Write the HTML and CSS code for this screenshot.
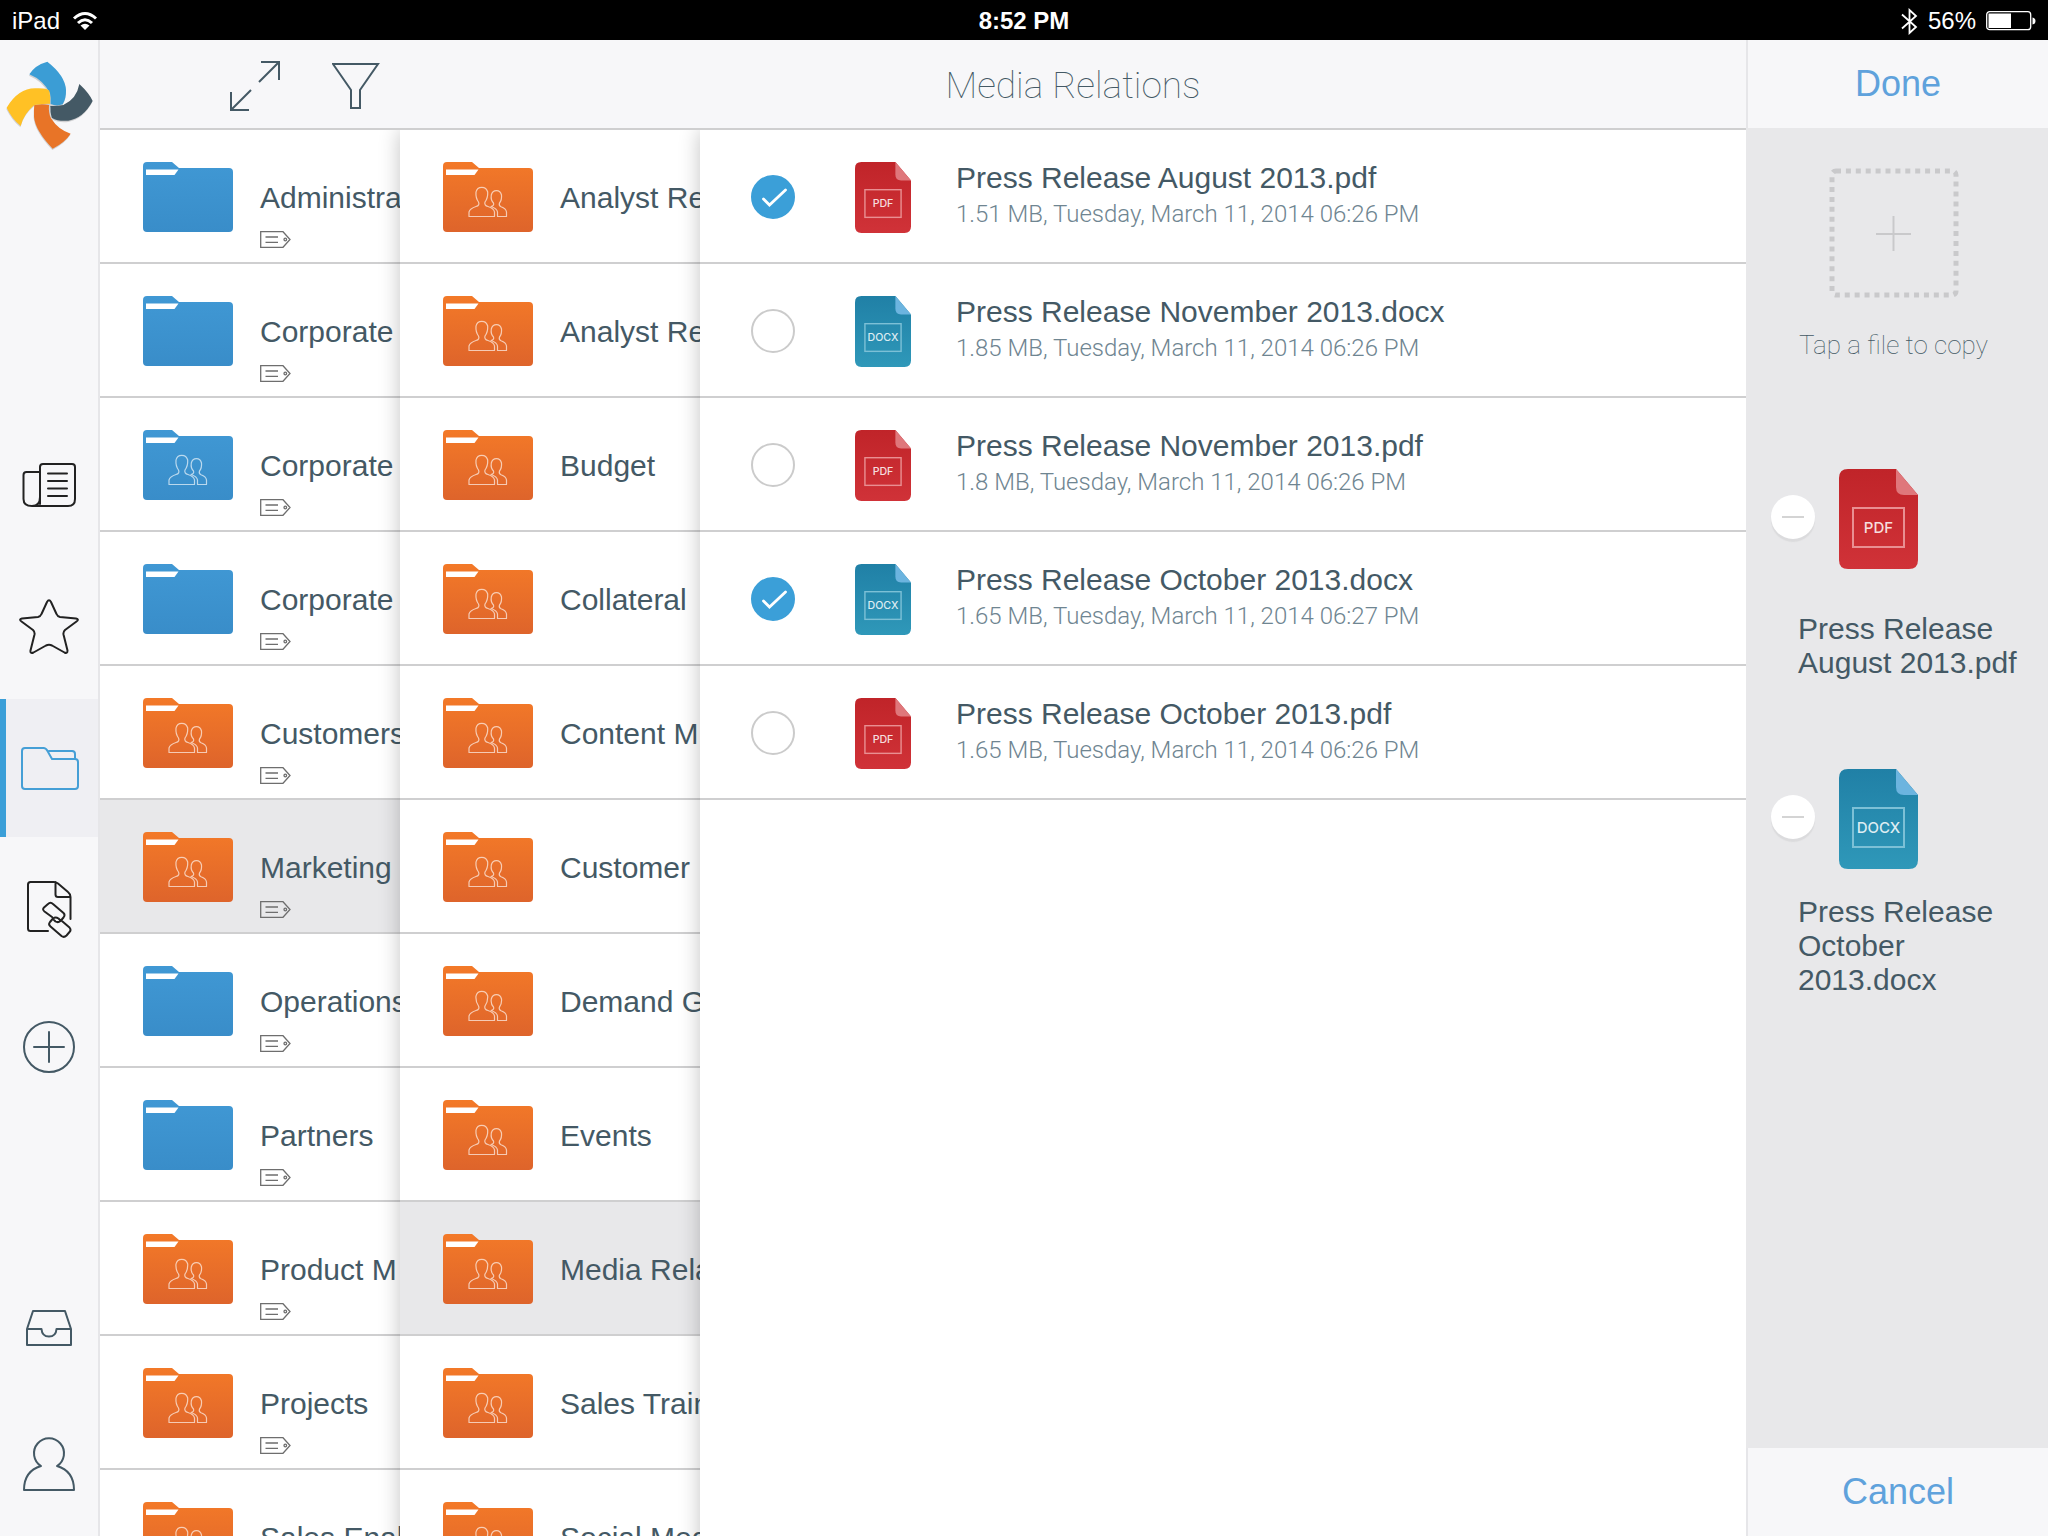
FILE: index.html
```html
<!DOCTYPE html>
<html lang="en">
<head>
<meta charset="utf-8">
<meta name="viewport" content="width=device-width, initial-scale=1">
<title>Media Relations</title>
<link rel="stylesheet" href="styles.css">
</head>
<body>
<svg class="defs" aria-hidden="true">
  <defs>
    <linearGradient id="g-orange" x1="0" y1="0" x2="0" y2="1"><stop offset="0" stop-color="#f37928"/><stop offset="1" stop-color="#de642b"/></linearGradient>
    <linearGradient id="g-blue" x1="0" y1="0" x2="0" y2="1"><stop offset="0" stop-color="#4098d4"/><stop offset="1" stop-color="#398dc9"/></linearGradient>
    <linearGradient id="g-pdf" x1="0" y1="0" x2="0" y2="1"><stop offset="0" stop-color="#c02429"/><stop offset="1" stop-color="#d03238"/></linearGradient>
    <linearGradient id="g-docx" x1="0" y1="0" x2="0" y2="1"><stop offset="0" stop-color="#2080a6"/><stop offset="1" stop-color="#2f98b9"/></linearGradient>
  </defs>
  <symbol id="folder" viewBox="0 0 90 70">
    <path d="M4 0H29L36 6H86Q90 6 90 10V66Q90 70 86 70H4Q0 70 0 66V4Q0 0 4 0Z"/>
    <path fill="#fff" d="M3 7.500H35.500L31.500 13H3Z"/>
  </symbol>
  <symbol id="people" viewBox="0 0 90 70">
    <g fill="none" stroke="#fff" stroke-opacity=".65" stroke-width="1.200" stroke-linejoin="round">
      <path d="M26 54.500V50Q27 46.500 33 44.500Q37 43.500 35.500 40Q32.500 36 33 30Q34 25.300 38.800 25.300Q43.500 25.300 44.700 30Q45 36 42 40Q41 43.500 45 44.500Q51 46.500 51.500 50V54.500Z"/>
      <path d="M48 44.500Q51.500 43.500 50.500 41Q47.500 38 48.300 33Q49.300 28.700 53.500 28.700Q57.500 28.700 58.500 33Q59 38 56.500 41Q55.500 43.500 58 44.800Q63 46.500 63.500 50V54.500H54.500V50Q54 46.500 48 44.500Z"/>
    </g>
  </symbol>
  <symbol id="tag" viewBox="0 0 31 17">
    <g fill="none" stroke="#6e6e6e" stroke-width="1.300"><path d="M.7 .7H23L30 8.500L23 16.300H.7ZM5.500 6H18M5.500 11.300H18"/><circle cx="25.300" cy="8.500" r="1.300"/></g>
  </symbol>
  <symbol id="doc" viewBox="0 0 79 100">
    <path d="M9 0H57L79 26V91Q79 100 70 100H9Q0 100 0 91V9Q0 0 9 0Z"/>
  </symbol>
  <symbol id="doc-pdf" viewBox="0 0 79 100">
    <use href="#doc" width="79" height="100" fill="url(#g-pdf)"/>
    <path fill="#df777b" d="M57 0L79 26H65Q57 26 57 18Z"/>
    <rect x="14" y="39" width="51" height="39" fill="none" stroke="#e98f92" stroke-width="2"/>
    <text class="doc-type" x="39.500" y="64" text-anchor="middle">PDF</text>
  </symbol>
  <symbol id="doc-docx" viewBox="0 0 79 100">
    <use href="#doc" width="79" height="100" fill="url(#g-docx)"/>
    <path fill="#6cb4df" d="M57 0L79 26H65Q57 26 57 18Z"/>
    <rect x="14" y="39" width="51" height="39" fill="none" stroke="#7cc0d6" stroke-width="2"/>
    <text class="doc-type" x="39.500" y="64" text-anchor="middle">DOCX</text>
  </symbol>
  <symbol id="tick" viewBox="0 0 44 44"><path d="M12.500 24L18.500 30L34.500 15" fill="none" stroke="#fff" stroke-width="2.800" stroke-linecap="round"/></symbol>
</svg>

<div class="app">
  <div class="status">
    <div class="status-side">
      <span>iPad</span>
      <svg width="26" height="20" viewBox="0 0 26 20" aria-label="Wi-Fi"><g fill="none" stroke="#fff" stroke-width="3"><path d="M2 7.500Q13 -2.500 24 7.500"/><path d="M6 12Q13 5.500 20 12"/></g><path fill="#fff" d="M8.500 14.500Q13 11 17.500 14.500L13 19Z"/></svg>
    </div>
    <strong class="clock">8:52 PM</strong>
    <div class="status-side status-end">
      <svg width="17" height="27" viewBox="0 0 17 27" aria-label="Bluetooth"><path d="M1 6.500L15 19L8.500 25V2L15 8L1 20.500" fill="none" stroke="#fff" stroke-width="1.800"/></svg>
      <span>56%</span>
      <svg width="50" height="20" viewBox="0 0 50 20" aria-label="Battery"><rect x=".7" y=".7" width="44" height="18" rx="3" fill="none" stroke="#fff" stroke-width="1.300"/><path fill="#fff" d="M2.500 2.500H25V17H2.500ZM46.500 6.500Q49.500 7 49.500 10T46.500 13.500Z"/></svg>
    </div>
  </div>

  <nav class="sidebar" aria-label="Main">
    <svg class="logo" viewBox="15 12 270 276" aria-label="Home">
      <g opacity=".3" transform="translate(-1 4)"><path fill="#777" d="M142 20Q196 62 198 105Q199 130 188 148L155 188Q175 225 212 236Q195 262 158 281Q105 225 102 185L103 150Q72 175 62 213Q35 190 20 158Q55 100 105 100L150 115Q130 75 88 58Q105 30 142 20ZM155 188Q175 200 205 197Q250 190 278 138L151 153Z"/></g>
      <path fill="#3b9dd5" d="M142 20Q196 62 198 105Q199 130 188 148Q170 155 152 147Q153 130 150 115Q130 75 88 58Q105 30 142 20Z"/>
      <path fill="#445965" d="M238 87Q268 115 278 138Q250 190 205 197Q175 200 155 188Q150 170 151 153Q170 154 190 150Q230 132 238 87Z"/>
      <path fill="#e87427" d="M103 150Q125 146 147 150Q145 175 153 190Q175 225 212 236Q195 262 158 281Q105 225 102 185Q101 165 103 150Z"/>
      <path fill="#ffc125" d="M20 158Q55 100 105 100Q140 98 148 107Q152 125 150 146Q130 146 103 150Q72 175 62 213Q35 190 20 158Z"/>
    </svg>
    <div class="nav-group">
      <a class="nav-item" href="#news" aria-label="News"><svg width="56" height="56" viewBox="0 0 56 56"><path d="M19 45V8Q19 5 22 5H51Q54 5 54 8V40Q54 47 47 47H11Q2.500 47 2.500 40V16Q2.500 13 5.500 13H19M19 38Q19 47 11 47M27 14.500H46M27 22H46M27 29.500H46M27 37H46"/></svg></a>
      <a class="nav-item" href="#favorites" aria-label="Favorites"><svg width="60" height="56" viewBox="0 0 60 56"><path d="M28 3Q30 -.5 32 3L37.500 15Q38.500 17.500 41 18L57 19.500Q60.500 20.500 57.500 22.500L46 31Q44 33 44.500 35.500L48.500 51.500Q48.500 55 45.500 53.500L33 46.500Q30 45 27 46.500L14.500 53.500Q11 55 11.500 51.500L15.500 35.500Q16 33 14 31L2.500 22.500Q-.5 20.500 3 19.500L19 18Q21.500 17.500 22.500 15Z"/></svg></a>
      <a class="nav-item active" href="#files" aria-label="Files" aria-current="page"><svg width="58" height="44" viewBox="0 0 58 44"><path d="M31 13L26.500 5Q25 2 22.500 2H4Q1 2 1 5V40Q1 43 4 43H54Q57 43 57 40V16Q57 13 54 13ZM28 5H51Q54 5 54 8V13"/></svg></a>
      <a class="nav-item" href="#links" aria-label="Shared links"><svg width="48" height="64" viewBox="-2 -6 48 64"><path d="M21 50H3.500Q1 50 1 47.500V3.500Q1 1 3.500 1H27Q29 1 31 2.500L41 11Q43.500 13 43.500 16V38M28.500 1V13.500Q28.500 16 31 16H43.500"/><path d="M25 36L17.500 30.500Q15 28.500 17 26.500L21 23Q23.500 20.500 26 23L36.500 32Q38.500 34 36.500 36.500L33.500 40Q31 42 28.500 40.500L27 39M35.500 40.500L42.500 46.500Q44.500 49 42.500 51L39.500 54.500Q37 57 34.500 55L23.500 45.500Q21 43.500 23 41L26 37.500Q28.500 35.500 31.500 37.500L33 39"/></svg></a>
      <a class="nav-item slate" href="#new" aria-label="Add"><svg width="52" height="52" viewBox="0 0 52 52"><circle cx="26" cy="26" r="25"/><path d="M26 11V41M11 26H41"/></svg></a>
    </div>
    <div class="nav-group nav-bottom">
      <a class="nav-item slate" href="#inbox" aria-label="Inbox"><svg width="46" height="36" viewBox="0 0 46 36"><path d="M1 19L7 1H39L45 19V35H1ZM1 19H15.500Q16 26.500 23 26.500T30.500 19H45"/></svg></a>
      <a class="nav-item slate" href="#account" aria-label="Account"><svg width="52" height="54" viewBox="0 0 52 54"><path d="M18 29A15 15 0 1 1 34 29Q51 34 51 53H1Q1 34 18 29Z"/></svg></a>
    </div>
  </nav>

  <header class="toolbar">
    <div class="tools">
      <button class="tool" aria-label="Expand"><svg width="50" height="50" viewBox="0 0 50 50"><path d="M29 21L49 1M31 1H49V19M21 29L1 49M1 31V49H19"/></svg></button>
      <button class="tool" aria-label="Filter"><svg width="48" height="48" viewBox="0 0 48 48"><path d="M1 2H46L28 28V46H19V28Z"/></svg></button>
    </div>
    <h1>Media Relations</h1>
  </header>

  <main class="browser">
    <ul class="column column-root">
      <li><a class="folder" href="#"><svg class="folder-icon blue"><use href="#folder"/></svg><span class="folder-text">Administration<svg class="tag"><use href="#tag"/></svg></span></a></li>
      <li><a class="folder" href="#"><svg class="folder-icon blue"><use href="#folder"/></svg><span class="folder-text">Corporate<svg class="tag"><use href="#tag"/></svg></span></a></li>
      <li><a class="folder" href="#"><svg class="folder-icon blue"><use href="#folder"/><use href="#people"/></svg><span class="folder-text">Corporate<svg class="tag"><use href="#tag"/></svg></span></a></li>
      <li><a class="folder" href="#"><svg class="folder-icon blue"><use href="#folder"/></svg><span class="folder-text">Corporate<svg class="tag"><use href="#tag"/></svg></span></a></li>
      <li><a class="folder" href="#"><svg class="folder-icon"><use href="#folder"/><use href="#people"/></svg><span class="folder-text">Customers<svg class="tag"><use href="#tag"/></svg></span></a></li>
      <li><a class="folder selected" href="#"><svg class="folder-icon"><use href="#folder"/><use href="#people"/></svg><span class="folder-text">Marketing<svg class="tag"><use href="#tag"/></svg></span></a></li>
      <li><a class="folder" href="#"><svg class="folder-icon blue"><use href="#folder"/></svg><span class="folder-text">Operations<svg class="tag"><use href="#tag"/></svg></span></a></li>
      <li><a class="folder" href="#"><svg class="folder-icon blue"><use href="#folder"/></svg><span class="folder-text">Partners<svg class="tag"><use href="#tag"/></svg></span></a></li>
      <li><a class="folder" href="#"><svg class="folder-icon"><use href="#folder"/><use href="#people"/></svg><span class="folder-text">Product M<svg class="tag"><use href="#tag"/></svg></span></a></li>
      <li><a class="folder" href="#"><svg class="folder-icon"><use href="#folder"/><use href="#people"/></svg><span class="folder-text">Projects<svg class="tag"><use href="#tag"/></svg></span></a></li>
      <li><a class="folder" href="#"><svg class="folder-icon"><use href="#folder"/><use href="#people"/></svg><span class="folder-text">Sales Enablement<svg class="tag"><use href="#tag"/></svg></span></a></li>
    </ul>
    <ul class="column">
      <li><a class="folder" href="#"><svg class="folder-icon"><use href="#folder"/><use href="#people"/></svg><span class="folder-text">Analyst Relations</span></a></li>
      <li><a class="folder" href="#"><svg class="folder-icon"><use href="#folder"/><use href="#people"/></svg><span class="folder-text">Analyst Reports</span></a></li>
      <li><a class="folder" href="#"><svg class="folder-icon"><use href="#folder"/><use href="#people"/></svg><span class="folder-text">Budget</span></a></li>
      <li><a class="folder" href="#"><svg class="folder-icon"><use href="#folder"/><use href="#people"/></svg><span class="folder-text">Collateral</span></a></li>
      <li><a class="folder" href="#"><svg class="folder-icon"><use href="#folder"/><use href="#people"/></svg><span class="folder-text">Content M</span></a></li>
      <li><a class="folder" href="#"><svg class="folder-icon"><use href="#folder"/><use href="#people"/></svg><span class="folder-text">Customer</span></a></li>
      <li><a class="folder" href="#"><svg class="folder-icon"><use href="#folder"/><use href="#people"/></svg><span class="folder-text">Demand Generation</span></a></li>
      <li><a class="folder" href="#"><svg class="folder-icon"><use href="#folder"/><use href="#people"/></svg><span class="folder-text">Events</span></a></li>
      <li><a class="folder selected" href="#"><svg class="folder-icon"><use href="#folder"/><use href="#people"/></svg><span class="folder-text">Media Relations</span></a></li>
      <li><a class="folder" href="#"><svg class="folder-icon"><use href="#folder"/><use href="#people"/></svg><span class="folder-text">Sales Training</span></a></li>
      <li><a class="folder" href="#"><svg class="folder-icon"><use href="#folder"/><use href="#people"/></svg><span class="folder-text">Social Media</span></a></li>
    </ul>
    <ul class="column column-files">
      <li><label class="file"><span class="check"><input type="checkbox" checked><svg><use href="#tick"/></svg></span><svg class="doc-small"><use href="#doc-pdf"/></svg><span class="file-text"><span class="file-name">Press Release August 2013.pdf</span><span class="file-meta">1.51 MB, Tuesday, March 11, 2014 06:26 PM</span></span></label></li>
      <li><label class="file"><span class="check"><input type="checkbox"></span><svg class="doc-small"><use href="#doc-docx"/></svg><span class="file-text"><span class="file-name">Press Release November 2013.docx</span><span class="file-meta">1.85 MB, Tuesday, March 11, 2014 06:26 PM</span></span></label></li>
      <li><label class="file"><span class="check"><input type="checkbox"></span><svg class="doc-small"><use href="#doc-pdf"/></svg><span class="file-text"><span class="file-name">Press Release November 2013.pdf</span><span class="file-meta">1.8 MB, Tuesday, March 11, 2014 06:26 PM</span></span></label></li>
      <li><label class="file"><span class="check"><input type="checkbox" checked><svg><use href="#tick"/></svg></span><svg class="doc-small"><use href="#doc-docx"/></svg><span class="file-text"><span class="file-name">Press Release October 2013.docx</span><span class="file-meta">1.65 MB, Tuesday, March 11, 2014 06:27 PM</span></span></label></li>
      <li><label class="file"><span class="check"><input type="checkbox"></span><svg class="doc-small"><use href="#doc-pdf"/></svg><span class="file-text"><span class="file-name">Press Release October 2013.pdf</span><span class="file-meta">1.65 MB, Tuesday, March 11, 2014 06:26 PM</span></span></label></li>
    </ul>
  </main>

  <aside class="tray">
    <div class="tray-bar tray-top"><button class="text-button">Done</button></div>
    <div class="tray-body">
      <div class="drop">
        <svg width="130" height="130" viewBox="0 0 130 130" fill="none" stroke="#c9c9cb"><rect x="3" y="3" width="124" height="124" rx="4" stroke-width="5" stroke-dasharray="5 4.900"/><path stroke-width="2" d="M47 66H82M64.500 48V83"/></svg>
        <p>Tap a file to copy</p>
      </div>
      <ul class="picked">
        <li>
          <div class="picked-head"><button class="remove" aria-label="Remove Press Release August 2013.pdf"></button><svg class="doc-large"><use href="#doc-pdf"/></svg></div>
          <p class="picked-name">Press Release August 2013.pdf</p>
        </li>
        <li>
          <div class="picked-head"><button class="remove" aria-label="Remove Press Release October 2013.docx"></button><svg class="doc-large"><use href="#doc-docx"/></svg></div>
          <p class="picked-name">Press Release October 2013.docx</p>
        </li>
      </ul>
    </div>
    <div class="tray-bar tray-foot"><button class="text-button">Cancel</button></div>
  </aside>
</div>
</body>
</html>
```
FILE: styles.css
```css
* {
  box-sizing: border-box;
}

body {
  margin: 0;
  background: #fff;
  color: #445965;
  font-family: "Liberation Sans", Arial, sans-serif;
  font-size: 30px;
  line-height: 34px;
}

ul,
p,
h1 {
  margin: 0;
  padding: 0;
  list-style: none;
}

a {
  color: inherit;
  text-decoration: none;
}

button {
  padding: 0;
  border: 0;
  background: none;
  color: inherit;
  font: inherit;
}

svg {
  display: block;
  flex: none;
}

.defs {
  position: absolute;
  width: 0;
  height: 0;
}

.app {
  display: grid;
  grid-template: 40px 90px minmax(0, 1fr) / 100px minmax(0, 1fr) 302px;
  grid-template-areas:
    "status status status"
    "nav toolbar tray"
    "nav browser tray";
  height: 100vh;
  overflow: hidden;
}

/* Status bar */
.status {
  grid-area: status;
  display: grid;
  grid-template-columns: 1fr auto 1fr;
  align-items: center;
  padding: 2px 12px 0;
  background: #000;
  color: #fff;
  font-size: 24px;
}

.status-side {
  display: flex;
  align-items: center;
  gap: 12px;
}

.status-end {
  justify-content: flex-end;
  gap: 10px;
}

.clock {
  font-weight: 700;
}

/* Sidebar */
.sidebar {
  grid-area: nav;
  display: flex;
  flex-direction: column;
  border-right: 2px solid #e6e6e9;
  background: #f7f7f9;
}

.logo {
  width: 90px;
  height: 92px;
  margin: 19px 0 0 5px;
}

.nav-group {
  display: grid;
  grid-auto-rows: 140px;
  margin-top: 266px;
}

.nav-bottom {
  grid-auto-rows: 136px;
  margin-top: auto;
  margin-bottom: 4px;
}

.nav-item {
  display: grid;
  place-items: center;
}

.nav-item svg {
  fill: none;
  stroke: #222;
  stroke-width: 2;
  stroke-linejoin: round;
  stroke-linecap: round;
}

.nav-item.slate svg {
  stroke: #445965;
}

.nav-item.active {
  margin-top: 2px;
  padding-right: 4px;
  border-left: 6px solid #3b9fd8;
  background: #efeff3;
}

.nav-item.active svg {
  stroke: #459fd6;
}

/* Toolbar */
.toolbar {
  grid-area: toolbar;
  display: grid;
  grid-template-columns: 300px minmax(0, 1fr);
  align-items: center;
  padding-top: 3px;
  border-bottom: 2px solid #cfcfd0;
  background: #f7f7f9;
}

.tools {
  display: flex;
  justify-content: flex-end;
  align-items: center;
  gap: 52px;
  padding-right: 20px;
}

.tool svg {
  fill: none;
  stroke: #445965;
  stroke-width: 2;
}

h1 {
  font: 100 37px/40px Roboto, "Liberation Sans", sans-serif;
  text-align: center;
}

/* Column browser */
.browser {
  grid-area: browser;
  display: grid;
  grid-template-columns: 300px 300px minmax(0, 1fr);
  overflow: hidden;
}

.column {
  background: #fff;
  box-shadow: 0 0 20px rgba(0, 0, 0, .24);
  min-width: 0;
}

.column-root {
  box-shadow: none;
}

.folder,
.file {
  display: flex;
  height: 134px;
  border-bottom: 2px solid #cfcfd0;
}

.folder {
  gap: 27px;
  padding: 32px 0 0 43px;
  overflow: hidden;
  white-space: nowrap;
}

.folder.selected {
  background: #e8e8ea;
}

.folder-icon {
  width: 90px;
  height: 70px;
  fill: url(#g-orange);
}

.folder-icon.blue {
  fill: url(#g-blue);
}

.folder-text {
  padding-top: 19px;
}

.tag {
  width: 31px;
  height: 17px;
  margin-top: 16px;
}

.file {
  align-items: center;
  padding: 2px 0 0 51px;
}

.check {
  display: grid;
  width: 44px;
  height: 44px;
  margin-right: 60px;
}

.check > * {
  grid-area: 1 / 1;
  width: 44px;
  height: 44px;
  margin: 0;
}

.check input {
  appearance: none;
  border: 2px solid #cbcbcb;
  border-radius: 50%;
}

.check input:checked {
  border-color: #3b9fd8;
  background: #3b9fd8;
}

.doc-small {
  width: 56px;
  height: 71px;
  margin-right: 45px;
}

.doc-large {
  width: 79px;
  height: 100px;
}

.doc-type {
  fill: #fff;
  fill-opacity: .85;
  font: 500 15px Inter, "Liberation Sans", sans-serif;
}

.file-text {
  display: grid;
  gap: 4px;
  padding-bottom: 4px;
}

.file-meta {
  color: #6f8591;
  font: 300 24px/30px Roboto, "Liberation Sans", sans-serif;
}

/* Copy tray */
.tray {
  grid-area: tray;
  display: flex;
  flex-direction: column;
  z-index: 1;
  background: #e8e8ea;
}

.tray-bar {
  display: grid;
  place-items: center;
  height: 88px;
  border-left: 2px solid #e6e6e9;
  background: #f7f7f9;
}

.text-button {
  color: #5fa2dc;
  font-size: 36px;
  line-height: 40px;
}

.tray-body {
  flex: 1;
  padding: 40px 20px 0 25px;
}

.drop {
  display: grid;
  justify-items: center;
  gap: 32px;
  padding-right: 12px;
  font: 100 26px/30px Roboto, "Liberation Sans", sans-serif;
}

.picked {
  display: grid;
  gap: 72px;
  margin-top: 109px;
}

.picked-head {
  display: flex;
  gap: 24px;
}

.remove {
  display: grid;
  place-items: center;
  width: 44px;
  height: 44px;
  margin-top: 26px;
  border-radius: 50%;
  background: #fff;
  box-shadow: 0 3px 1px #dbdbdd;
}

.remove::before {
  content: "";
  width: 22px;
  height: 2px;
  background: #d4d4d4;
}

.picked-name {
  display: flex;
  align-items: center;
  min-height: 102px;
  margin: 26px 0 0 27px;
}
```
